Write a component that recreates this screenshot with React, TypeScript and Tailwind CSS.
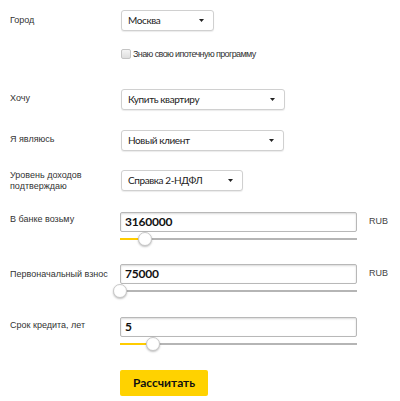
import React from "react";

const labelCls =
  "w-[110px] shrink-0 text-[9px] leading-[11px] text-[#333] font-['Liberation_Sans',Arial,sans-serif]";

function Select({ text, w }: { text: string; w: string }) {
  return (
    <div
      className={`ml-px ${w} h-[21px] flex items-center justify-between pl-[6px] pr-[9px] border border-[#d0d0d0] rounded-[3px] bg-white shadow-[0_1px_1px_rgba(0,0,0,0.08)] text-[10px] tracking-[-0.4px] text-[#222] font-['Lato',sans-serif]`}
    >
      <span>{text}</span>
      <svg width="5" height="3" viewBox="0 0 5 3">
        <path d="M0 0 L5 0 L2.5 3 Z" fill="#222" />
      </svg>
    </div>
  );
}

function Input({ value }: { value: string }) {
  return (
    <div className="w-[237px] h-[20px] flex items-center pl-[4px] border border-[#b8b8b8] rounded-[2px] bg-white shadow-[inset_0_1px_2px_rgba(0,0,0,0.15)] text-[12px] tracking-[-0.2px] font-bold text-[#111] font-['Lato',sans-serif]">
      {value}
    </div>
  );
}

function Slider({ fill, thumb }: { fill: string; thumb: string }) {
  return (
    <div className="relative w-[237px] h-[14px]">
      <div className="absolute left-0 right-0 top-[6px] h-[2px] bg-[#b5b5b5]" />
      <div className={`absolute left-0 top-[6px] h-[2px] bg-[#ffcc00] ${fill}`} />
      <div
        className={`absolute top-0 ${thumb} w-[14px] h-[14px] rounded-full bg-white border border-[#c8c8c8] shadow-[0_1px_2px_rgba(0,0,0,0.25)]`}
      />
    </div>
  );
}

export default function App() {
  return (
    <div className="w-[400px] h-[401px] bg-white overflow-hidden pl-[10px] pt-[10px]">
      {/* Город */}
      <div className="flex">
        <div className={`${labelCls} pt-[5px]`}>Город</div>
        <Select text="Москва" w="w-[93px]" />
      </div>

      {/* checkbox */}
      <div className="flex items-center mt-[18px] ml-[111px] h-[10px]">
        <div className="w-[10px] h-[10px] rounded-[2px] border border-[#c4c4c4] bg-gradient-to-b from-[#f4f4f4] to-[#dedede]" />
        <span className="ml-[2px] text-[9px] tracking-[-0.6px] text-[#333] font-['Liberation_Sans',Arial,sans-serif] leading-[10px]">
          Знаю свою ипотечную программу
        </span>
      </div>

      {/* Хочу */}
      <div className="flex mt-[30px]">
        <div className={`${labelCls} pt-[4px]`}>Хочу</div>
        <Select text="Купить квартиру" w="w-[164px]" />
      </div>

      {/* Я являюсь */}
      <div className="flex mt-[20px]">
        <div className={`${labelCls} pt-[4px]`}>Я являюсь</div>
        <Select text="Новый клиент" w="w-[163px]" />
      </div>

      {/* Уровень доходов */}
      <div className="flex mt-[19px]">
        <div className={`${labelCls} pt-0`}>
          Уровень доходов
          <br />
          подтверждаю
        </div>
        <Select text="Справка 2-НДФЛ" w="w-[122px]" />
      </div>

      {/* В банке возьму */}
      <div className="flex mt-[20px]">
        <div className={`${labelCls} pt-[2px]`}>В банке возьму</div>
        <div className="flex flex-col">
          <Input value="3160000" />
          <Slider fill="w-[25px]" thumb="left-[18px]" />
        </div>
        <div className="ml-[12px] pt-[3px] text-[9px] text-[#444] font-['Liberation_Sans',Arial,sans-serif]">
          RUB
        </div>
      </div>

      {/* Первоначальный взнос */}
      <div className="flex mt-[18px]">
        <div className={`${labelCls} pt-[5px]`}>Первоначальный взнос</div>
        <div className="flex flex-col">
          <Input value="75000" />
          <Slider fill="w-0" thumb="left-[-7px]" />
        </div>
        <div className="ml-[12px] pt-[3px] text-[9px] text-[#444] font-['Liberation_Sans',Arial,sans-serif]">
          RUB
        </div>
      </div>

      {/* Срок кредита */}
      <div className="flex mt-[19px]">
        <div className={`${labelCls} pt-[3px]`}>Срок кредита, лет</div>
        <div className="flex flex-col">
          <Input value="5" />
          <Slider fill="w-[33px]" thumb="left-[26px]" />
        </div>
      </div>

      {/* Button */}
      <div className="mt-[18px] ml-[110px]">
        <button className="w-[88px] h-[26px] rounded-[2px] bg-[#ffd200] text-[12px] font-bold text-[#111] font-['Lato',sans-serif]">
          Рассчитать
        </button>
      </div>
    </div>
  );
}
